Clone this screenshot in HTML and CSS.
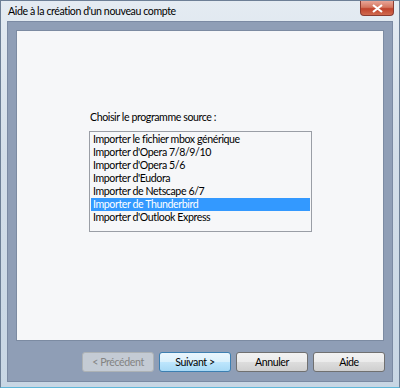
FILE: index.html
```html
<!DOCTYPE html>
<html lang="fr">
<head>
    <meta charset="UTF-8">
    <title>Aide à la création d'un nouveau compte</title>
    <link rel="stylesheet" href="styles.css">
</head>
<body>
    <div class="window">
        <div class="titlebar">
            <span class="title">Aide à la création d'un nouveau compte</span>
            <span class="close">
                <svg width="13" height="9" viewBox="0 0 13 9">
                    <path d="M2 1 L11 8 M11 1 L2 8" stroke="#fff" stroke-width="2.2" fill="none"/>
                </svg>
            </span>
        </div>

        <div class="client">
            <div class="panel">
                <div class="label">Choisir le programme source :</div>
                <ul class="listbox">
                    <li>Importer le fichier mbox générique</li>
                    <li>Importer d'Opera 7/8/9/10</li>
                    <li>Importer d'Opera 5/6</li>
                    <li>Importer d'Eudora</li>
                    <li>Importer de Netscape 6/7</li>
                    <li class="selected">Importer de Thunderbird</li>
                    <li>Importer d'Outlook Express</li>
                </ul>
            </div>

            <div class="buttons">
                <button class="btn disabled">&lt; Précédent</button>
                <button class="btn default">Suivant &gt;</button>
                <button class="btn">Annuler</button>
                <button class="btn">Aide</button>
            </div>
        </div>
    </div>
</body>
</html>
```

FILE: styles.css
```css
/* Vista style wizard dialog */
html, body {
    margin: 0;
    padding: 0;
}

body {
    width: 400px;
    height: 388px;
    overflow: hidden;
    font-family: Lato, "Open Sans", sans-serif;
    font-size: 10.6px;
    letter-spacing: -0.4px;
    color: #000;
}

.window {
    box-sizing: border-box;
    width: 400px;
    height: 388px;
    padding: 0 6px 5px 6px;
    background: linear-gradient(180deg, #e4ebf2 0%, #d3dee9 40%, #c8d6e4 100%);
    border: 1px solid #6d7f96;
    border-bottom-color: #5fb6d8;
}

.titlebar {
    display: flex;
    align-items: flex-start;
    height: 20px;
}

.title {
    padding: 4px 0 0 1px;
    line-height: 13px;
    color: #000;
}

.close {
    margin-left: auto;
    margin-right: -1px;
    display: flex;
    align-items: center;
    justify-content: center;
    width: 32px;
    height: 14px;
    border: 1px solid #8a3b31;
    border-top: none;
    border-radius: 0 0 4px 4px;
    background: linear-gradient(180deg, #e8a597 0%, #d4765f 45%, #c0432d 55%, #d06a4f 100%);
}

.client {
    display: flex;
    flex-direction: column;
    height: 361px;
    padding: 8px 8px 0 8px;
    background: #8f9eb6;
    border: 1px solid #7b8aa3;
    box-sizing: border-box;
}

.panel {
    box-sizing: border-box;
    height: 311px;
    padding: 79px 0 0 72px;
    background: #f6f7f9;
    border: 1px solid #7c8ba2;
}

.label {
    height: 21px;
    line-height: 14px;
    padding-left: 1px;
}

.listbox {
    list-style: none;
    margin: 0;
    padding: 1px;
    width: 223px;
    height: 101px;
    box-sizing: border-box;
    background: #f6f7f9;
    border: 1px solid #9a9ea6;
}

.listbox li {
    height: 13px;
    line-height: 13px;
    padding-left: 2px;
    white-space: nowrap;
}

.listbox li.selected {
    background: #3399ff;
    color: #fff;
}

.buttons {
    display: flex;
    justify-content: flex-end;
    gap: 5px;
    padding-top: 11px;
    margin-right: -1px;
}

.btn {
    width: 72px;
    height: 20px;
    padding: 0;
    font-family: inherit;
    font-size: 10.6px;
    letter-spacing: inherit;
    color: #000;
    border: 1px solid #707070;
    border-radius: 3px;
    background: linear-gradient(180deg, #f2f2f2 0%, #ebebeb 50%, #dddddd 51%, #cfcfcf 100%);
}

.btn.default {
    border-color: #3c7fb1;
    background: linear-gradient(180deg, #eaf6fd 0%, #d9f0fc 50%, #bee6fd 51%, #a7d9f5 100%);
}

.btn.disabled {
    color: #838383;
    border-color: #adb2b5;
    background: #c4cbd4;
}
```
